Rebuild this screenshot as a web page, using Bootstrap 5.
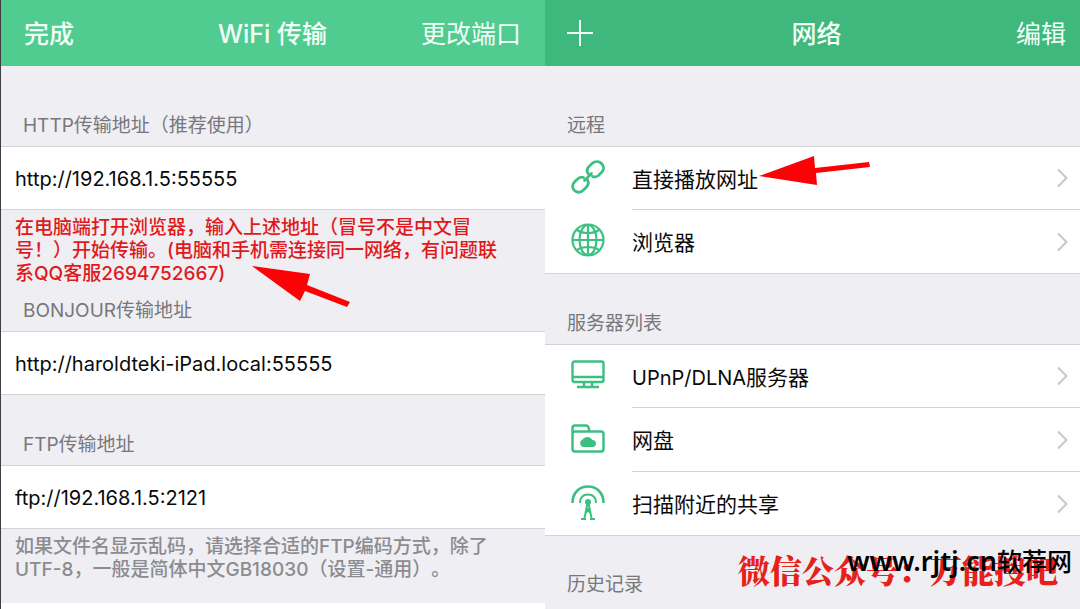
<!DOCTYPE html>
<html lang="zh-CN">
<head>
<meta charset="utf-8">
<meta name="viewport" content="width=device-width, initial-scale=1">
<title>WiFi 传输 / 网络</title>
<link href="https://cdn.jsdelivr.net/npm/bootstrap@5.3.0/dist/css/bootstrap.min.css" rel="stylesheet">
<style>
  body { font-family: Inter, "Noto Sans CJK SC", sans-serif; background: #efeef3; color: #0a0a0a; }
  .screens { display: grid; grid-template-columns: 109fr 107fr; min-height: 100vh; overflow: hidden; }
  .screen-left { border-left: 1px solid #3f3d46; }
  .topbar { display: grid; grid-template-columns: 1fr auto 1fr; align-items: center; height: 66px; padding: 2px 24px 0 23px; background: #50cc90; color: #f2fff8; font-size: 25px; line-height: 32px; }
  .topbar-net { background: #3fb87d; padding: 2px 14px 0 22px; }
  .topbar button { border: 0; padding: 0; background: none; color: inherit; line-height: 32px; }
  .topbar h1 { font-size: 25px; line-height: 32px; }
  .label-row { display: flex; align-items: flex-end; padding: 0 22px 8px; margin: 0; font-size: 19px; line-height: 24px; font-weight: 400; color: #77777c; }
  .gap-top { height: 80px; }
  .gap-mid { height: 70px; }
  .gap-note { height: 46px; }
  .gap-last { height: 69px; }
  .value-row { height: 64px; padding: 2px 14px 0; background: #fff; border: solid #d3d2d7; border-width: 1px 0; font-size: 20px; line-height: 28px; }
  .note { margin: 0; padding: 6px 32px 22px 14px; font-size: 19px; line-height: 23px; color: #8b8b90; font-weight: 500; text-spacing-trim: space-all; }
  .note-red { padding-bottom: 0; color: #e01a1c; }
  .net-list { background: #fff; border: solid #d3d2d7; border-width: 1px 0; }
  .net-item { display: flex; align-items: stretch; height: 64px; padding-left: 26px; color: #0a0a0a; text-decoration: none; font-size: 21px; line-height: 28px; }
  .net-item:first-child { height: 62px; }
  .net-item .glyph { width: 34px; margin-right: 27px; align-self: center; flex: none; overflow: visible; }
  .net-item .txt { border-top: 1px solid #d3d2d7; padding-right: 10px; }
  .net-item .txt > span { padding-top: 3px; }
  .net-item:first-child .txt { border-top: 0; }
  .net-item .latin { font-size: 20px; }
  .pointer { position: absolute; overflow: visible; }
  .marks { position: absolute; right: 8px; bottom: 12px; width: 334px; height: 52px; white-space: nowrap; pointer-events: none; }
  .mark-red { position: absolute; left: 0; top: 4px; font: 900 32px/40px "Noto Serif CJK SC", "Noto Sans CJK SC", serif; color: #e8201a; }
  .mark-site { position: absolute; right: 0; top: 0; font: 600 27px/32px "Noto Sans", "Noto Sans CJK SC", sans-serif; color: #000; }
  .mark-site span { font-weight: 500; font-size: 25px; }
</style>
</head>
<body>
<main class="screens position-relative">
  <section class="screen-left d-flex flex-column">
    <header class="topbar">
      <button type="button" class="text-start fw-medium">完成</button>
      <h1 class="m-0">WiFi 传输</h1>
      <button type="button" class="text-end">更改端口</button>
    </header>
    <h2 class="label-row gap-top">HTTP传输地址（推荐使用）</h2>
    <div class="value-row d-flex align-items-center">http://192.168.1.5:55555</div>
    <div class="position-relative">
      <p class="note note-red">在电脑端打开浏览器，输入上述地址（冒号不是中文冒号！）开始传输。(电脑和手机需连接同一网络，有问题联系QQ客服2694752667)</p>
      <svg class="pointer" style="left:251px;top:56px" width="98" height="42" viewBox="0 0 98 42" aria-hidden="true"><path fill="#fb0207" d="M0 0 58 8 55 19 98 36 95 41 53 25 48 35Z"/></svg>
    </div>
    <h2 class="label-row gap-note">BONJOUR传输地址</h2>
    <div class="value-row d-flex align-items-center">http://haroldteki-iPad.local:55555</div>
    <h2 class="label-row gap-mid">FTP传输地址</h2>
    <div class="value-row d-flex align-items-center">ftp://192.168.1.5:2121</div>
    <p class="note">如果文件名显示乱码，请选择合适的FTP编码方式，除了<span class="text-nowrap">UTF-8</span>，一般是简体中文GB18030（设置-通用）。</p>
    <div class="bg-white flex-grow-1"></div>
  </section>

  <section class="d-flex flex-column">
    <header class="topbar topbar-net">
      <button type="button" class="text-start" aria-label="添加"><svg class="d-block" width="26" height="28" viewBox="0 0 26 28"><path d="M13 0V26M0 13H26" stroke="currentColor" stroke-width="2"/></svg></button>
      <h1 class="m-0">网络</h1>
      <button type="button" class="text-end">编辑</button>
    </header>
    <h2 class="label-row gap-top">远程</h2>
    <nav class="net-list position-relative">
      <a class="net-item" href="#">
        <svg class="glyph" viewBox="0 1 34 34" height="34" fill="none" stroke="#3cc081" stroke-width="2.8" stroke-linecap="round"><path d="M17.500 14C15 11 16 8 19 5.500L21 3.500C24 1 28 .8 30.500 3.500C33.500 6.500 33 10 30.500 12.500L27.500 15.500C25.500 17 23.500 17.500 21.500 16.500M12.500 17.500C10 16.500 8 17.500 6 19.500L3.500 22C1 24.500 .8 28 3.500 30.500C6.500 33 10 32.500 12.500 30L15 27.500C17.500 25 18 22.500 16.500 20M13.500 20.500 20.500 13.500"/></svg>
        <span class="txt flex-grow-1 d-flex align-items-center justify-content-between"><span>直接播放网址</span><svg width="14" height="20" viewBox="0 0 14 20" fill="none" stroke="#c6c6cb" stroke-width="2"><path d="M2 1.500 10.500 10 2 18.500"/></svg></span>
      </a>
      <a class="net-item" href="#">
        <svg class="glyph" viewBox="0 0 34 34" height="34" fill="none" stroke="#3cc081" stroke-width="2.2"><circle cx="17" cy="16" r="15.500"/><ellipse cx="17" cy="16" rx="8.500" ry="15"/><path d="M17 1V31M2 16H32M6 6C12 10 22 10 28 6M6 26C12 22 22 22 28 26"/></svg>
        <span class="txt flex-grow-1 d-flex align-items-center justify-content-between"><span>浏览器</span><svg width="14" height="20" viewBox="0 0 14 20" fill="none" stroke="#c6c6cb" stroke-width="2"><path d="M2 1.500 10.500 10 2 18.500"/></svg></span>
      </a>
      <svg class="pointer" style="left:214px;top:9px" width="111" height="29" viewBox="0 0 111 29" aria-hidden="true"><path fill="#fb0207" d="M0 20 55 0 56 12 110 6 111 11 57 17 58 29Z"/></svg>
    </nav>
    <h2 class="label-row gap-mid">服务器列表</h2>
    <nav class="net-list">
      <a class="net-item" href="#">
        <svg class="glyph" viewBox="0 0 34 34" height="34" fill="none" stroke="#3cc081" stroke-width="2.400"><rect x="1.500" y="2.500" width="31" height="20.500" rx="2"/><path d="M2 18H32M13 23V27.500M21 23V27.500M6 28H28"/></svg>
        <span class="txt flex-grow-1 d-flex align-items-center justify-content-between"><span><span class="latin">UPnP/DLNA</span>服务器</span><svg width="14" height="20" viewBox="0 0 14 20" fill="none" stroke="#c6c6cb" stroke-width="2"><path d="M2 1.500 10.500 10 2 18.500"/></svg></span>
      </a>
      <a class="net-item" href="#">
        <svg class="glyph" viewBox="0 0 34 34" height="34" fill="none" stroke="#3cc081" stroke-width="2.500"><path d="M1.500 11V6Q1.500 3.500 4 3.500H15Q17 3.500 17.500 5.500L18.500 9.500M4 9.500H30Q32.500 9.500 32.500 12V27Q32.500 29.500 30 29.500H4Q1.500 29.500 1.500 27V12Q1.500 9.500 4 9.500Z"/><path fill="#3cc081" stroke="none" d="M12 25A4 4 0 0 1 11.500 17.500A6 6 0 0 1 21.500 18A3.600 3.600 0 0 1 22.500 25Z"/></svg>
        <span class="txt flex-grow-1 d-flex align-items-center justify-content-between"><span>网盘</span><svg width="14" height="20" viewBox="0 0 14 20" fill="none" stroke="#c6c6cb" stroke-width="2"><path d="M2 1.500 10.500 10 2 18.500"/></svg></span>
      </a>
      <a class="net-item" href="#">
        <svg class="glyph" viewBox="0 1 34 34" height="34" fill="none" stroke="#3cc081" stroke-width="2.600"><path d="M1.500 18C1.500 8 8 1.500 17 1.500S32.500 8 32.500 18"/><path stroke-width="2" d="M9 18C9 12 12 9.500 17 9.500S25 12 25 18"/><circle cx="17" cy="17" r="3" fill="#3cc081" stroke="none"/><path stroke-width="2" d="M16.500 18 13.500 33M17.500 18 20.500 33M15 24H19M14 29 18 24M20 29 16 24M10 34H15M19 34H24"/></svg>
        <span class="txt flex-grow-1 d-flex align-items-center justify-content-between"><span>扫描附近的共享</span><svg width="14" height="20" viewBox="0 0 14 20" fill="none" stroke="#c6c6cb" stroke-width="2"><path d="M2 1.500 10.500 10 2 18.500"/></svg></span>
      </a>
    </nav>
    <h2 class="label-row gap-last">历史记录</h2>
  </section>

  <div class="marks">
    <div class="mark-red">微信公众号：万能搜吧</div>
    <div class="mark-site">www.rjtj.cn<span>软荐网</span></div>
  </div>
</main>
<script src="https://cdn.jsdelivr.net/npm/bootstrap@5.3.0/dist/js/bootstrap.bundle.min.js"></script>
</body>
</html>
